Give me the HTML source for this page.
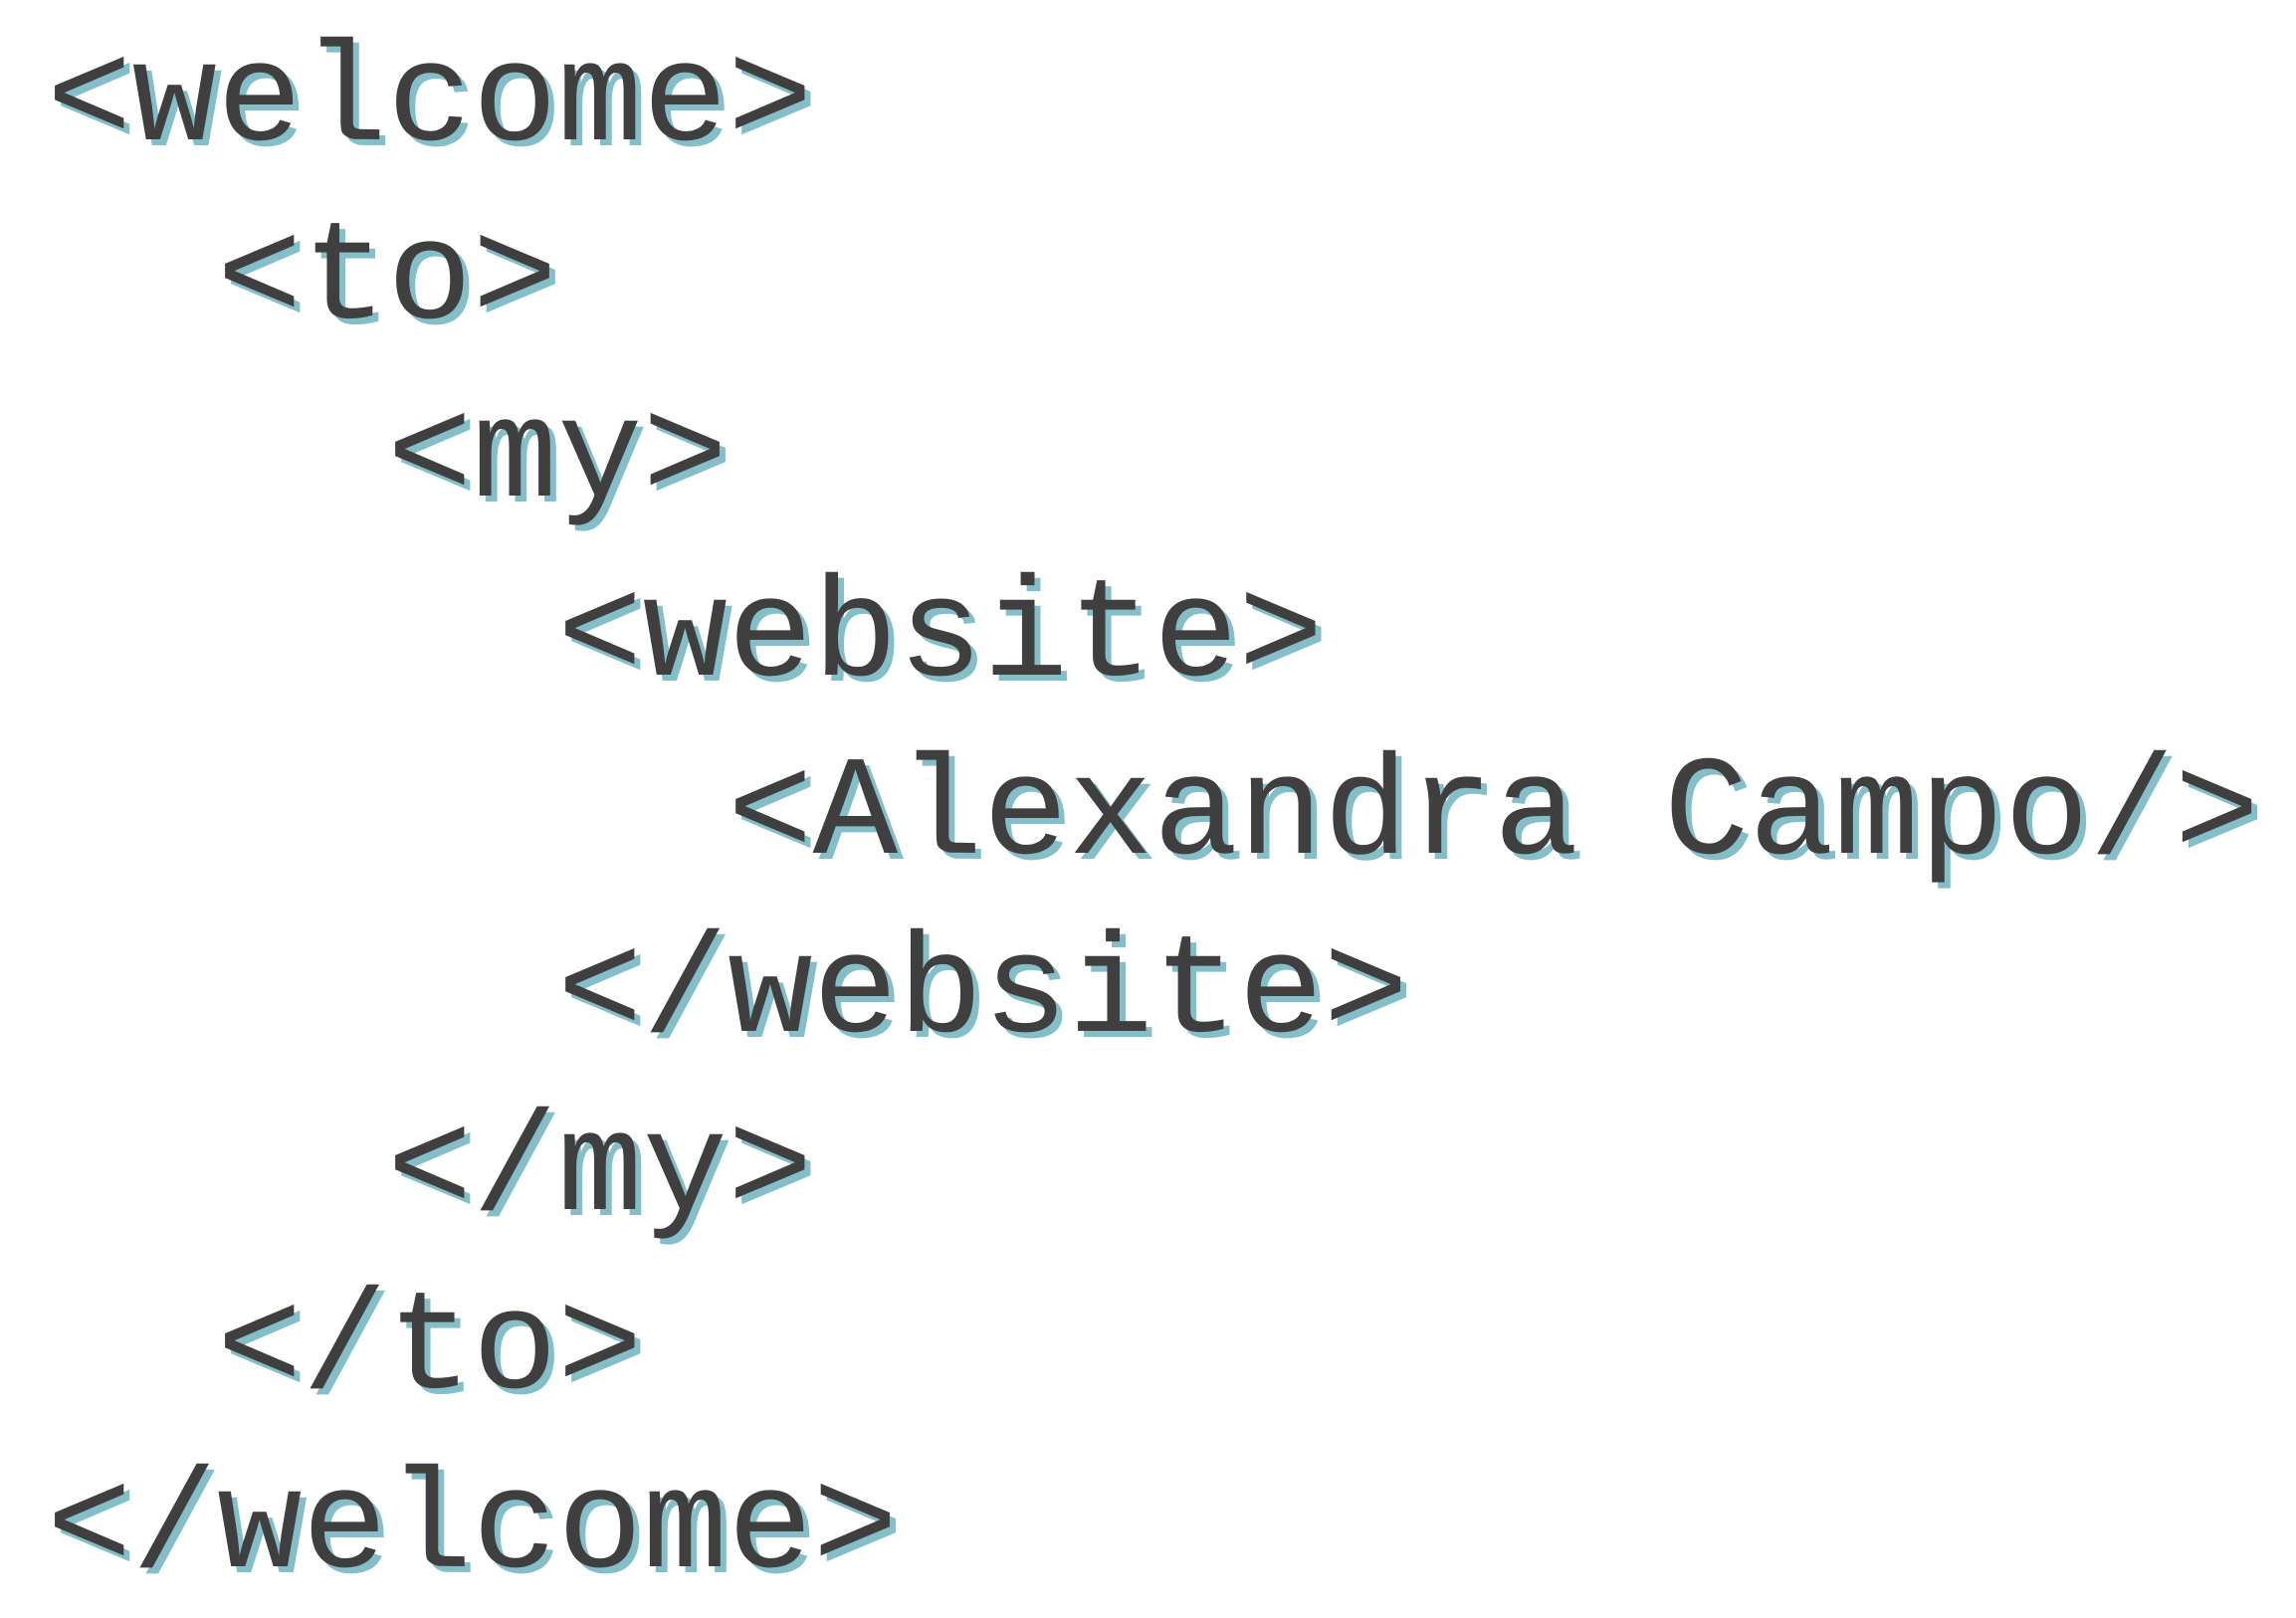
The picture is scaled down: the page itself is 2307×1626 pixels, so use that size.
<!DOCTYPE html>
<html><head><meta charset="utf-8"><style>
html,body{margin:0;padding:0;background:#fff;width:2307px;height:1614px;overflow:hidden}
pre{margin:0;position:absolute;left:47px;top:13px;font-family:"Liberation Mono",monospace;font-size:142.5px;line-height:179.2px;color:#3f3f3f;text-shadow:6px 6px 0 #84bfc9;white-space:pre}
</style></head><body>
<pre>&lt;welcome&gt;
  &lt;to&gt;
    &lt;my&gt;
      &lt;website&gt;
        &lt;Alexandra Campo/&gt;
      &lt;/website&gt;
    &lt;/my&gt;
  &lt;/to&gt;
&lt;/welcome&gt;</pre>
</body></html>
